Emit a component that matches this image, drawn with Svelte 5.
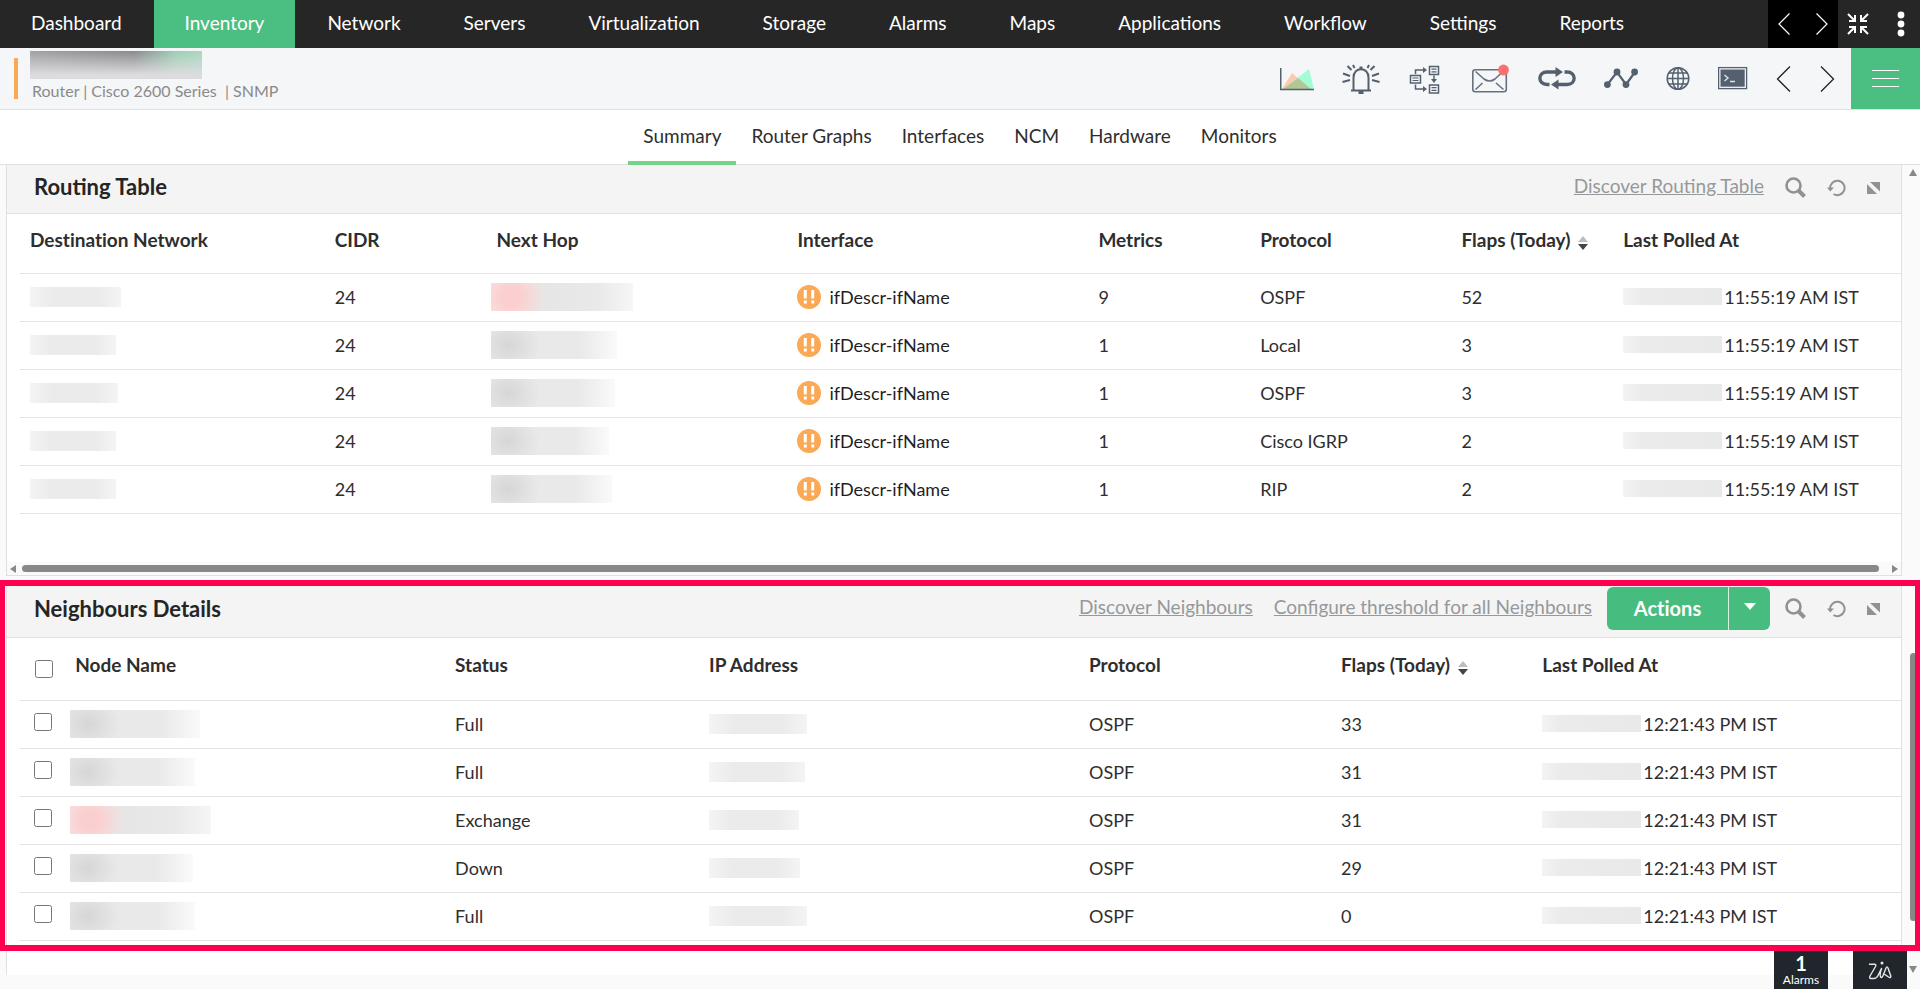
<script lang="ts">
  type Route = {
    destWidth: number;
    cidr: number;
    hopWidth: number;
    hopAlert?: boolean;
    iface: string;
    metrics: number;
    protocol: string;
    flaps: number;
    polled: string;
  };

  type Neighbour = {
    id: number;
    nameWidth: number;
    alert?: boolean;
    status: string;
    ipWidth: number;
    protocol: string;
    flaps: number;
    polled: string;
    checked: boolean;
  };

  const menu = [
    "Dashboard", "Inventory", "Network", "Servers", "Virtualization", "Storage", "Alarms",
    "Maps", "Applications", "Workflow", "Settings", "Reports",
  ];
  const tabs = ["Summary", "Router Graphs", "Interfaces", "NCM", "Hardware", "Monitors"];

  let activeMenu = $state("Inventory");
  let activeTab = $state("Summary");

  const routes: Route[] = [
    { destWidth: 91, cidr: 24, hopWidth: 142, hopAlert: true, iface: "ifDescr-ifName", metrics: 9, protocol: "OSPF", flaps: 52, polled: "11:55:19 AM IST" },
    { destWidth: 86, cidr: 24, hopWidth: 126, iface: "ifDescr-ifName", metrics: 1, protocol: "Local", flaps: 3, polled: "11:55:19 AM IST" },
    { destWidth: 88, cidr: 24, hopWidth: 124, iface: "ifDescr-ifName", metrics: 1, protocol: "OSPF", flaps: 3, polled: "11:55:19 AM IST" },
    { destWidth: 86, cidr: 24, hopWidth: 118, iface: "ifDescr-ifName", metrics: 1, protocol: "Cisco IGRP", flaps: 2, polled: "11:55:19 AM IST" },
    { destWidth: 86, cidr: 24, hopWidth: 121, iface: "ifDescr-ifName", metrics: 1, protocol: "RIP", flaps: 2, polled: "11:55:19 AM IST" },
  ];

  let neighbours: Neighbour[] = $state([
    { id: 1, nameWidth: 130, status: "Full", ipWidth: 98, protocol: "OSPF", flaps: 33, polled: "12:21:43 PM IST", checked: false },
    { id: 2, nameWidth: 125, status: "Full", ipWidth: 96, protocol: "OSPF", flaps: 31, polled: "12:21:43 PM IST", checked: false },
    { id: 3, nameWidth: 141, alert: true, status: "Exchange", ipWidth: 90, protocol: "OSPF", flaps: 31, polled: "12:21:43 PM IST", checked: false },
    { id: 4, nameWidth: 123, status: "Down", ipWidth: 91, protocol: "OSPF", flaps: 29, polled: "12:21:43 PM IST", checked: false },
    { id: 5, nameWidth: 125, status: "Full", ipWidth: 98, protocol: "OSPF", flaps: 0, polled: "12:21:43 PM IST", checked: false },
  ]);

  let allChecked = $derived(neighbours.every((n) => n.checked));

  function toggleAll() {
    const next = !allChecked;
    neighbours.forEach((n) => (n.checked = next));
  }
</script>

{#snippet panelTools()}
  <button class="tool" aria-label="Search">
    <svg width="21" height="21" viewBox="0 0 21 21" fill="none" stroke="#8f9294">
      <circle cx="8.5" cy="8.5" r="7" stroke-width="2.6" />
      <path d="M13.5 13.5 L19.500 19.500" stroke-width="4" />
    </svg>
  </button>
  <button class="tool" aria-label="Refresh">
    <svg width="19" height="18" viewBox="0 0 19 18" fill="none">
      <path d="M3.2 9.5 A7.2 7.2 0 1 1 6.5 15" stroke="#8f9294" stroke-width="2" />
      <path d="M0 8.5 L3.2 12.5 L7 8.5 Z" fill="#8f9294" />
    </svg>
  </button>
  <button class="tool" aria-label="Expand">
    <svg width="13" height="12" viewBox="0 0 13 12" fill="#8f9294">
      <path d="M3 0 H13 V9.5 Z" />
      <path d="M0 2 L10 12 H0 Z" />
    </svg>
  </button>
{/snippet}

{#snippet sortIcon()}
  <svg class="sort" width="10" height="14" viewBox="0 0 10 14">
    <path d="M5 0 L10 6 H0 Z" fill="#bdbdbd" />
    <path d="M0 8 H10 L5 14 Z" fill="#444" />
  </svg>
{/snippet}

{#snippet chevron(dir: string)}
  <svg width="16" height="28" viewBox="0 0 16 28" fill="none" stroke="currentColor" stroke-width="1.3">
    <path d={dir === "left" ? "M14 1.5 L1.5 14 L14 26.5" : "M1 1.5 L13.5 14 L1 26.5"} />
  </svg>
{/snippet}

<div class="app">
  <nav class="topnav">
    <div class="menu">
      {#each menu as item (item)}
        <a href="#{item}" class:active={activeMenu === item} onclick={() => (activeMenu = item)}>{item}</a>
      {/each}
    </div>
    <div class="nav-tools">
      <div class="pager">
        <button aria-label="Previous menus">
          <svg width="12" height="22" viewBox="0 0 12 22" fill="none" stroke="#fff" stroke-width="1.2"><path d="M11.5 0.5 L1 11 L11.5 21.5" /></svg>
        </button>
        <button aria-label="More menus">
          <svg width="12" height="22" viewBox="0 0 12 22" fill="none" stroke="#fff" stroke-width="1.2"><path d="M0.5 0.5 L11 11 L0.5 21.5" /></svg>
        </button>
      </div>
      <button class="collapse" aria-label="Collapse">
        <svg width="22" height="22" viewBox="0 0 22 22" fill="none" stroke="#fff" stroke-width="2">
          <path d="M1 1 L7 7 M8 2 V8 H2" />
          <path d="M21 1 L15 7 M14 2 V8 H20" />
          <path d="M1 21 L7 15 M8 20 V14 H2" />
          <path d="M21 21 L15 15 M14 20 V14 H20" />
        </svg>
      </button>
      <button class="more" aria-label="More options">
        <svg width="8" height="26" viewBox="0 0 8 26" fill="#fff">
          <circle cx="4" cy="4" r="3.4" /><circle cx="4" cy="13" r="3.4" /><circle cx="4" cy="22" r="3.4" />
        </svg>
      </button>
    </div>
  </nav>

  <header class="device">
    <span class="severity"></span>
    <div class="device-info">
      <div class="device-name"></div>
      <div class="device-sub">Router | Cisco 2600 Series &nbsp;| SNMP</div>
    </div>
    <div class="device-tools">
      <button aria-label="Performance graphs">
        <svg width="34" height="30" viewBox="0 0 34 30">
          <path d="M2 25 L12 9 L31 25 Z" fill="#fdc9b0" />
          <path d="M3 25 L29 5 L34 25 Z" fill="#a5fbd5" />
          <path d="M3 25 L18 14 L31 25 Z" fill="#b3c795" />
          <path d="M0.75 4 V25.5 H34" fill="none" stroke="#55606f" stroke-width="1.5" />
        </svg>
      </button>
      <button aria-label="Alarms">
        <svg width="38" height="30" viewBox="0 0 38 30" fill="none" stroke="#55606f" stroke-width="2">
          <path d="M9 26.5 H29" />
          <path d="M11.5 26 V13.5 C11.5 2.5 26.5 2.5 26.5 13.5 V26" />
          <path d="M19 2.5 V5 M16.5 28.5 H21.5" stroke-width="3" />
          <path d="M5.5 2 L9.5 6 M11 1 L12.5 4 M32.5 2 L28.5 6 M27 1 L25.5 4" />
          <path d="M1 9.5 L8 12 M0.5 18 L8 16 M37 9.5 L30 12 M37.5 18 L30 16" />
        </svg>
      </button>
      <button aria-label="Workflow">
        <svg width="34" height="30" viewBox="0 0 34 30" fill="none" stroke="#55606f" stroke-width="1.5">
          <rect x="21.5" y="2.5" width="9" height="8" />
          <path d="M23.5 5.2 H28.5 M23.5 7.8 H28.5" stroke-width="1.2" />
          <rect x="2.5" y="11.5" width="10" height="7.5" />
          <path d="M4.5 14 H10.5 M4.5 16.5 H10.5" stroke-width="1.2" />
          <rect x="21.5" y="21" width="9" height="8" />
          <path d="M23.5 23.7 H28.5 M23.5 26.3 H28.5" stroke-width="1.2" />
          <path d="M7.5 10 V6 H16 M7.5 20.5 V25 H16 M26 11.5 V16" />
          <path d="M15 3 L19 6 L15 9 Z M15 22 L19 25 L15 28 Z M23 15 H29 L26 19 Z" fill="#55606f" stroke="none" />
        </svg>
      </button>
      <button aria-label="Notifications">
        <svg width="40" height="30" viewBox="0 0 40 30" fill="none" stroke="#66717f" stroke-width="1.6">
          <rect x="2.8" y="5.8" width="33.5" height="22" rx="2.5" />
          <path d="M5.5 7.5 L14 15 Q19.5 19 25 15 L33 7.5 M5.5 25.5 L12.5 19 M33.5 25.5 L26 19" />
          <circle cx="33.5" cy="6" r="5.4" fill="#f9706e" stroke="none" />
        </svg>
      </button>
      <button aria-label="Sync">
        <svg width="38" height="30" viewBox="0 0 38 30" fill="none" stroke="#55606f" stroke-width="3.4">
          <path d="M11.5 20.500 H9 C-0.5 20.500 -0.5 8 9 8 H19" />
          <path d="M26.5 8 H29 C38.5 8 38.5 20.500 29 20.500 H19" />
          <path d="M17.5 3 L25 8 L17.5 13 Z M20.5 15.500 L13 20.500 L20.5 25.500 Z" fill="#55606f" stroke="none" />
        </svg>
      </button>
      <button aria-label="Trends">
        <svg width="34" height="30" viewBox="0 0 34 30" fill="#55606f">
          <path d="M3.5 20.5 L13 8 L22 20.5 L31 8" fill="none" stroke="#55606f" stroke-width="2.2" />
          <circle cx="3.4" cy="20.6" r="3.4" /><circle cx="13" cy="8" r="3.4" />
          <circle cx="22" cy="20.6" r="3.4" /><circle cx="30.6" cy="8" r="3.4" />
        </svg>
      </button>
      <button aria-label="Browse">
        <svg width="24" height="30" viewBox="0 0 24 30" fill="none" stroke="#55606f" stroke-width="1.5">
          <circle cx="12" cy="14.500" r="10.8" />
          <ellipse cx="12" cy="14.500" rx="5.5" ry="10.8" />
          <path d="M12 4 V25 M1.2 14.500 H22.8 M3 9 H21 M3 20 H21" />
        </svg>
      </button>
      <button aria-label="Terminal">
        <svg width="30" height="30" viewBox="0 0 30 30">
          <rect x="0.6" y="3.6" width="28" height="21" fill="none" stroke="#55606f" stroke-width="1.3" />
          <rect x="2.5" y="5.5" width="24.2" height="17.2" fill="#55606f" />
          <path d="M6.5 11 L10 14 L6.5 17 M12 17.5 H17" fill="none" stroke="#dfe3e6" stroke-width="1.4" />
        </svg>
      </button>
      <button aria-label="Previous device">{@render chevron("left")}</button>
      <button aria-label="Next device">{@render chevron("right")}</button>
    </div>
    <button class="burger" aria-label="Device menu">
      <span></span><span></span><span></span>
    </button>
  </header>

  <div class="tabs" role="tablist">
    {#each tabs as tab (tab)}
      <button role="tab" aria-selected={activeTab === tab} class:active={activeTab === tab} onclick={() => (activeTab = tab)}>{tab}</button>
    {/each}
  </div>

  <main class="content">
    <div class="panels">
      <section class="panel">
        <div class="panel-head">
          <h2>Routing Table</h2>
          <a href="#discover-routes">Discover Routing Table</a>
          {@render panelTools()}
        </div>
        <div class="table-wrap">
          <table class="routing">
            <colgroup>
              <col class="c-dest" /><col class="c-cidr" /><col class="c-hop" /><col class="c-iface" />
              <col class="c-metrics" /><col class="c-proto" /><col class="c-flaps" /><col />
            </colgroup>
            <thead>
              <tr>
                <th>Destination Network</th>
                <th>CIDR</th>
                <th>Next Hop</th>
                <th>Interface</th>
                <th>Metrics</th>
                <th>Protocol</th>
                <th>Flaps (Today) {@render sortIcon()}</th>
                <th>Last Polled At</th>
              </tr>
            </thead>
            <tbody>
              {#each routes as r}
                <tr>
                  <td><span class="mask" style="width: {r.destWidth}px"></span></td>
                  <td>{r.cidr}</td>
                  <td><span class="mask tall" class:alert={r.hopAlert} style="width: {r.hopWidth}px"></span></td>
                  <td>
                    <div class="iface">
                      <svg width="24" height="24" viewBox="0 0 24 24">
                        <circle cx="12" cy="12" r="12" fill="#faa955" />
                        <path d="M8.3 5 V13.5 M15.7 5 V13.5 M8.3 15.5 V18.5 M15.7 15.5 V18.5" stroke="#fff" stroke-width="3" />
                      </svg>
                      {r.iface}
                    </div>
                  </td>
                  <td>{r.metrics}</td>
                  <td>{r.protocol}</td>
                  <td>{r.flaps}</td>
                  <td><div class="polled"><span class="mask date"></span>{r.polled}</div></td>
                </tr>
              {/each}
            </tbody>
          </table>
        </div>
        <div class="hscroll">
          <svg width="6" height="8" viewBox="0 0 6 8" fill="#888"><path d="M6 0 V8 L0 4 Z" /></svg>
          <span class="hthumb"></span>
          <svg width="6" height="8" viewBox="0 0 6 8" fill="#888"><path d="M0 0 V8 L6 4 Z" /></svg>
        </div>
      </section>

      <section class="panel neighbours-panel">
        <div class="panel-head">
          <h2>Neighbours Details</h2>
          <a href="#discover-neighbours">Discover Neighbours</a>
          <a href="#configure-threshold">Configure threshold for all Neighbours</a>
          <div class="actions">
            <button>Actions</button>
            <button class="caret" aria-label="Open actions">
              <svg width="12" height="7" viewBox="0 0 12 7" fill="#fff"><path d="M0 0 H12 L6 7 Z" /></svg>
            </button>
          </div>
          {@render panelTools()}
        </div>
        <div class="table-wrap">
          <table class="neighbours">
            <colgroup>
              <col class="n-check" /><col class="n-name" /><col class="n-status" /><col class="n-ip" />
              <col class="n-proto" /><col class="n-flaps" /><col />
            </colgroup>
            <thead>
              <tr>
                <th><input type="checkbox" aria-label="Select all" checked={allChecked} onchange={toggleAll} /></th>
                <th>Node Name</th>
                <th>Status</th>
                <th>IP Address</th>
                <th>Protocol</th>
                <th>Flaps (Today) {@render sortIcon()}</th>
                <th>Last Polled At</th>
              </tr>
            </thead>
            <tbody>
              {#each neighbours as n (n.id)}
                <tr>
                  <td><input type="checkbox" aria-label="Select row {n.id}" bind:checked={n.checked} /></td>
                  <td><span class="mask tall" class:alert={n.alert} style="width: {n.nameWidth}px"></span></td>
                  <td>{n.status}</td>
                  <td><span class="mask" style="width: {n.ipWidth}px"></span></td>
                  <td>{n.protocol}</td>
                  <td>{n.flaps}</td>
                  <td><div class="polled"><span class="mask date"></span>{n.polled}</div></td>
                </tr>
              {/each}
            </tbody>
          </table>
        </div>
        <div class="highlight"></div>
      </section>
    </div>

    <div class="vscroll">
      <svg width="8" height="7" viewBox="0 0 8 7" fill="#888"><path d="M0 7 H8 L4 0 Z" /></svg>
      <span class="vtrack"><span class="vthumb"></span></span>
      <svg width="8" height="7" viewBox="0 0 8 7" fill="#888"><path d="M0 0 H8 L4 7 Z" /></svg>
    </div>
  </main>

  <div class="dock">
    <button><b>1</b><span>Alarms</span></button>
    <button aria-label="Zia">
      <svg width="24" height="19" viewBox="0 0 24 19" fill="none" stroke="#e4e7ea" stroke-width="1.4" stroke-linecap="round" stroke-linejoin="round">
        <path d="M1.5 3.2 H6.5 Q8.500 3.2 7.5 5.5 L2 15 Q1 17.5 3 17.5 H6 Q8.500 17.5 10 14.5 L13.5 7.5 Q11.500 14 12.500 16 Q14 17.5 15.5 13.5 L18 7 Q19 4.8 20 7 L22.8 15 Q23 17.5 20.500 16 L15.5 12.5" />
        <circle cx="14" cy="2" r="0.8" />
      </svg>
    </button>
  </div>
</div>

<style>
  :global(body) {
    margin: 0;
  }
  .app {
    height: 100vh;
    display: flex;
    flex-direction: column;
    position: relative;
    overflow: hidden;
    font-family: Lato, "Open Sans", sans-serif;
    font-size: 18px;
    line-height: 24px;
    color: #2e2e2e;
    background: #fafafa;
  }
  button {
    border: 0;
    padding: 0;
    background: none;
    font: inherit;
    color: inherit;
    cursor: pointer;
  }
  svg {
    display: block;
    flex: none;
  }

  /* top navigation */
  .topnav {
    flex: none;
    height: 48px;
    display: flex;
    justify-content: space-between;
    background: #262626;
    color: #fff;
  }
  .menu {
    display: flex;
    gap: 1px;
  }
  .menu a {
    padding: 0 31px;
    font-size: 19px;
    line-height: 46px;
    color: #fff;
    text-decoration: none;
  }
  .menu a.active {
    background: #4bbe82;
  }
  .nav-tools {
    display: flex;
    align-items: stretch;
  }
  .nav-tools button {
    display: flex;
    align-items: center;
  }
  .pager {
    display: flex;
    justify-content: space-between;
    width: 50px;
    padding: 0 10px;
    background: #000;
  }
  .collapse {
    margin-left: 9px;
  }
  .more {
    margin: 0 15px 0 28px;
  }

  /* device header */
  .device {
    flex: none;
    height: 61px;
    display: flex;
    align-items: stretch;
    background: #f5f6f8;
    border-bottom: 1px solid #e0e0e0;
  }
  .severity {
    width: 4px;
    margin: 10px 12px 10px 14px;
    background: #faa955;
  }
  .device-info {
    flex: 1;
    padding-top: 3px;
  }
  .device-name {
    width: 172px;
    height: 28px;
    background:
      linear-gradient(to bottom, rgba(226, 226, 228, 0), #dcdcdf 85%),
      linear-gradient(to right, #a3a1a2, #8b898b 60%, #9dcfb4 85%, #a8d8bf);
  }
  .device-sub {
    padding-left: 2px;
    font-size: 16px;
    color: #8a8a8a;
  }
  .device-tools {
    display: flex;
    align-items: center;
    gap: 28px;
    padding-right: 15px;
    color: #222;
  }
  .burger {
    width: 69px;
    display: flex;
    flex-direction: column;
    align-items: center;
    justify-content: center;
    gap: 7px;
    background: #4bbe82;
  }
  .burger span {
    width: 27px;
    height: 1px;
    background: #fff;
  }

  /* tabs */
  .tabs {
    flex: none;
    height: 54px;
    display: flex;
    justify-content: center;
    background: #fff;
    border-bottom: 1px solid #e0e0e0;
  }
  .tabs button {
    margin-bottom: -1px;
    padding: 0 15px;
    font-size: 19px;
    border-bottom: 4px solid transparent;
  }
  .tabs button.active {
    border-bottom-color: #74d389;
  }

  /* content */
  .content {
    flex: 1;
    min-height: 0;
    display: flex;
  }
  .panels {
    flex: 1;
    min-width: 0;
    display: flex;
    flex-direction: column;
    gap: 4px;
    padding-left: 6px;
  }
  .panel {
    background: #fff;
    border: 1px solid #e0e0e0;
    border-top: 0;
  }
  .panel-head {
    display: flex;
    align-items: center;
    gap: 21px;
    height: 48px;
    padding: 0 21px 0 27px;
    background: #f4f4f4;
    border-bottom: 1px solid #e0e0e0;
  }
  .panel-head h2 {
    flex: 1;
    margin: 0;
    padding-bottom: 4px;
    font-size: 22px;
    font-weight: 700;
    color: #252525;
  }
  .panel-head a {
    padding-bottom: 7px;
    font-size: 19px;
    color: #96999b;
  }
  .tool {
    padding-bottom: 3px;
  }
  .table-wrap {
    padding-left: 13px;
  }
  table {
    width: 100%;
    table-layout: fixed;
    border-collapse: separate;
    border-spacing: 0;
  }
  th,
  td {
    box-sizing: border-box;
    height: 48px;
    padding: 0 0 2px 10px;
    text-align: left;
    border-bottom: 1px solid #e3e3e3;
    white-space: nowrap;
  }
  th {
    height: 60px;
    padding-bottom: 7px;
    font-size: 19px;
    font-weight: 700;
    font-variant-ligatures: none;
  }
  .c-dest { width: 16.2%; }
  .c-cidr { width: 8.6%; }
  .c-hop { width: 16%; }
  .c-iface { width: 16%; }
  .c-metrics { width: 8.6%; }
  .c-proto { width: 10.7%; }
  .c-flaps { width: 8.6%; }
  .n-check { width: 2.4%; }
  .n-name { width: 20.2%; }
  .n-status { width: 13.5%; }
  .n-ip { width: 20.2%; }
  .n-proto { width: 13.4%; }
  .n-flaps { width: 10.7%; }

  .sort {
    display: inline-block;
    margin-left: 3px;
    vertical-align: -3px;
  }
  .iface,
  .polled {
    display: flex;
    align-items: center;
  }
  .iface {
    gap: 8px;
    color: #1f1f1f;
  }
  .mask {
    display: block;
    height: 20px;
    background: linear-gradient(to right, #f4f4f4, #ebebeb 25%, #ebebeb 75%, #f4f4f4);
  }
  .mask.tall {
    height: 28px;
    margin-left: -5px;
    background:
      radial-gradient(ellipse 32px 28px at 14% 50%, #d6d6d6, rgba(214, 214, 214, 0)),
      linear-gradient(to right, #e9e9e9, #e9e9e9 70%, #fafafa);
  }
  .mask.tall.alert {
    background:
      radial-gradient(ellipse 34px 32px at 14% 50%, #fbcfcf 30%, rgba(251, 207, 207, 0)),
      linear-gradient(to right, #f5e8e8, #e6e6e6 40%, #e9e9e9 75%, #f6f6f6);
  }
  .mask.date {
    width: 99px;
    height: 17px;
    margin-right: 2px;
    background: linear-gradient(to right, #f3f3f3, #ebebeb 20%, #e9e9e9);
  }

  .hscroll {
    display: flex;
    align-items: center;
    gap: 6px;
    height: 13px;
    margin-top: 48px;
    padding: 0 3px;
    background: #fafafa;
  }
  .hthumb {
    flex: 1;
    height: 7px;
    margin-right: 7px;
    border-radius: 4px;
    background: #888;
  }

  /* neighbours */
  .neighbours-panel {
    position: relative;
    padding-bottom: 34px;
    border-bottom: 0;
  }
  .neighbours-panel .panel-head {
    height: 57px;
  }
  .neighbours-panel .panel-head h2 {
    padding-bottom: 0;
  }
  .neighbours-panel .panel-head a {
    padding-bottom: 3px;
  }
  .neighbours-panel .tool {
    padding-bottom: 0;
  }
  .neighbours th {
    height: 63px;
    padding-bottom: 9px;
  }
  .neighbours th:first-child {
    padding: 0 0 0 15px;
  }
  .neighbours td:first-child {
    padding: 0 0 5px 14px;
  }
  .neighbours input {
    display: block;
    width: 18px;
    height: 18px;
    margin: 0;
  }
  .actions {
    display: flex;
    height: 43px;
    margin: 0 -6px;
    border-radius: 6px;
    overflow: hidden;
    background: #46bd7f;
    color: #fff;
    font-size: 20px;
    font-weight: 700;
    font-variant-ligatures: none;
  }
  .actions button {
    width: 121px;
    padding-bottom: 2px;
  }
  .actions .caret {
    width: 42px;
    display: flex;
    align-items: center;
    justify-content: center;
    padding-bottom: 4px;
    border-left: 1px solid #d8f2e4;
  }
  .highlight {
    position: absolute;
    inset: 0 -19px 24px -7px;
    border: 6px solid #ff0050;
    border-width: 6px 5px;
    pointer-events: none;
    z-index: 2;
  }

  .vscroll {
    width: 18px;
    display: flex;
    flex-direction: column;
    align-items: center;
    padding: 4px 0 16px 4px;
    box-sizing: border-box;
  }
  .vtrack {
    flex: 1;
    display: flex;
    flex-direction: column;
    justify-content: flex-end;
    padding-bottom: 45px;
  }
  .vthumb {
    width: 7px;
    height: 36%;
    border-radius: 4px;
    background: #888;
  }

  /* bottom dock */
  .dock {
    position: absolute;
    right: 13px;
    bottom: 0;
    display: flex;
    gap: 25px;
  }
  .dock button {
    width: 54px;
    height: 38px;
    display: flex;
    flex-direction: column;
    align-items: center;
    justify-content: center;
    background: #20262c;
    color: #fff;
  }
  .dock b {
    font-size: 20px;
    line-height: 20px;
  }
  .dock span {
    font-size: 12px;
    line-height: 14px;
  }
</style>
